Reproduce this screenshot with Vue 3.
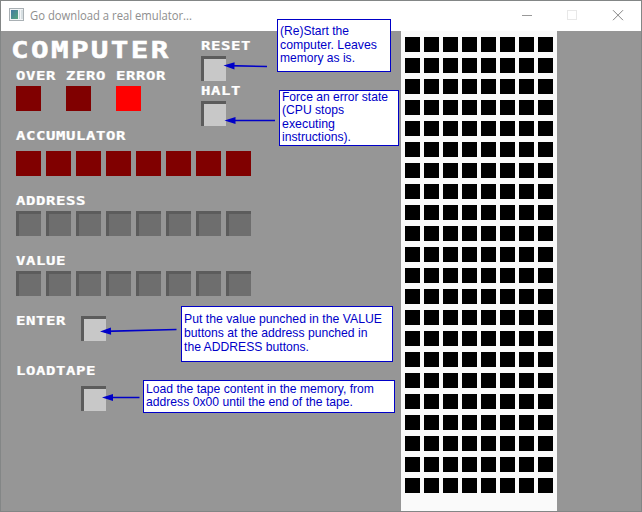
<script setup>
import { h } from 'vue'

const PixelLabel = (props) => {
  const big = props.big !== undefined
  const step = big ? 20 : 10
  const stretch = big ? 1.24 : 1.24
  const trailing = big ? 2.6 : 0.6
  const width = props.text.length * step
  return h('svg', { class: 'pixel-label', width, height: big ? 30 : 20 }, [
    h('text', {
      x: 0,
      y: big ? 22 : 14,
      'font-size': big ? 23.6 : 12.6,
      transform: `scale(${stretch} 1)`,
      textLength: (width - trailing) / stretch,
      lengthAdjust: 'spacing',
      class: big ? 'big' : 'small'
    }, props.text)
  ])
}
PixelLabel.props = ['text', 'big']

const lamps = [
  { name: 'OVER', on: false },
  { name: 'ZERO', on: false },
  { name: 'ERROR', on: true }
]

const notes = [
  {
    x: 277, y: 19, w: 114, h: 53,
    lines: [['(Re)Start the', 35, 69], ['computer. Leaves', 49, 97], ['memory as is.', 62, 75]],
    arrow: [267, 66.5, 223.5, 65.6]
  },
  {
    x: 279, y: 90, w: 120, h: 56,
    lines: [['Force an error state', 101, 106], ['(CPU stops', 114, 62], ['executing', 128, 53], ['instructions).', 141, 69]],
    arrow: [275, 120.5, 224.5, 120.5]
  },
  {
    x: 181, y: 306, w: 212, h: 56,
    lines: [['Put the value punched in the VALUE', 323, 198], ['buttons at the address punched in', 337, 183.5], ['the ADDRESS buttons.', 351, 125]],
    arrow: [176.5, 329.5, 100, 331.4]
  },
  {
    x: 143, y: 380, w: 252, h: 33,
    lines: [['Load the tape content in the memory, from', 393, 228], ['address 0x00 until the end of the tape.', 406, 207]],
    arrow: [139.5, 397.5, 102, 397.5]
  }
]

const angle = ([x1, y1, x2, y2]) => Math.atan2(y2 - y1, x2 - x1) * 180 / Math.PI
</script>

<template>
  <div class="window">
    <header class="titlebar">
      <svg class="app-icon" width="16" height="14">
        <defs>
          <linearGradient id="screen" x1="0" y1="0" x2="1" y2="1">
            <stop offset="0" stop-color="#4379a2" />
            <stop offset="1" stop-color="#55a77c" />
          </linearGradient>
        </defs>
        <rect x="0.5" y="0.5" width="14" height="12" fill="#f3f5f6" stroke="#a9b0b4" />
        <rect x="2" y="2" width="7" height="9" fill="url(#screen)" />
        <rect x="10" y="2" width="1" height="9" fill="#cbd8df" />
        <rect x="12" y="2" width="2" height="9" fill="#d7dfe2" />
      </svg>
      <svg class="caption" width="170" height="30">
        <text x="0" y="19" textLength="162" lengthAdjust="spacingAndGlyphs">Go download a real emulator...</text>
      </svg>
      <svg class="controls" width="110" height="30">
        <path d="M0 14.5h10" stroke="#999" />
        <rect x="45.5" y="9.5" width="9" height="9" fill="none" stroke="#e8e8e8" />
        <path d="M91 9.2l10 10M101 9.2l-10 10" stroke="#858585" />
      </svg>
    </header>

    <main class="body">
      <section class="panel">
        <div class="top">
          <div class="status">
            <div class="heading"><PixelLabel text="COMPUTER" big /></div>
            <div class="lamps">
              <div v-for="l in lamps" :key="l.name" class="lamp">
                <PixelLabel :text="l.name" />
                <i class="cell led" :class="{ on: l.on }"></i>
              </div>
            </div>
          </div>
          <div class="power">
            <PixelLabel text="RESET" />
            <i class="cell key"></i>
            <PixelLabel text="HALT" />
            <i class="cell key"></i>
          </div>
        </div>

        <div class="register accumulator">
          <PixelLabel text="ACCUMULATOR" />
          <div class="bits"><i v-for="n in 8" :key="n" class="cell led"></i></div>
        </div>
        <div class="register">
          <PixelLabel text="ADDRESS" />
          <div class="bits"><i v-for="n in 8" :key="n" class="cell toggle"></i></div>
        </div>
        <div class="register">
          <PixelLabel text="VALUE" />
          <div class="bits"><i v-for="n in 8" :key="n" class="cell toggle"></i></div>
        </div>
        <div class="enter">
          <PixelLabel text="ENTER" />
          <i class="cell key"></i>
        </div>
        <div class="load">
          <PixelLabel text="LOADTAPE" />
          <i class="cell key"></i>
        </div>
      </section>

      <section class="tape">
        <i v-for="n in 176" :key="n"></i>
      </section>
    </main>

    <svg class="notes" width="642" height="512">
      <g v-for="(n, i) in notes" :key="i">
        <rect :x="n.x + 0.5" :y="n.y + 0.5" :width="n.w - 1" :height="n.h - 1" fill="#fff" stroke="#0000c8" />
        <text
          v-for="[text, y, len] in n.lines" :key="text"
          :x="n.x + 3" :y="y" :textLength="len" lengthAdjust="spacingAndGlyphs"
        >{{ text }}</text>
        <line :x1="n.arrow[0]" :y1="n.arrow[1]" :x2="n.arrow[2] + 4" :y2="n.arrow[3]" stroke="#0000c8" stroke-width="1.6" />
        <path
          d="M0 0L-11 -3.6V3.6Z" fill="#0000c8"
          :transform="`translate(${n.arrow[2]} ${n.arrow[3]}) rotate(${angle(n.arrow)})`"
        />
      </g>
    </svg>
  </div>
</template>

<style>
body {
  margin: 0;
  overflow: hidden;
}

.pixel-label {
  display: block;
  flex: none;
  overflow: visible;
}

.pixel-label text {
  font-family: "DejaVu Sans Mono", monospace;
  font-weight: 700;
  fill: #fff;
  stroke: #fff;
  stroke-width: 0.25px;
}

.pixel-label .big {
  stroke-width: 0.5px;
}
</style>

<style scoped>
.window {
  position: relative;
  box-sizing: border-box;
  width: 642px;
  height: 512px;
  border: 1px solid #838686;
  background: #969696;
}

.titlebar {
  display: flex;
  height: 30px;
  background: #fff;
}

.app-icon {
  margin: 7px 5px 0 8px;
}

.caption {
  overflow: visible;
}

.caption text {
  font: 12px "Open Sans", sans-serif;
  fill: #8e8e8e;
}

.controls {
  margin-left: auto;
  margin-right: 9px;
}

.body {
  display: flex;
  height: 480px;
}

.panel {
  box-sizing: border-box;
  width: 400px;
  padding-left: 15px;
}

.top {
  display: flex;
  height: 95px;
}

.status {
  width: 185px;
}

.heading {
  height: 35px;
  margin-left: -5px;
  padding-top: 5px;
  box-sizing: border-box;
}

.lamps {
  display: flex;
}

.lamp {
  width: 50px;
}

.power {
  padding-top: 5px;
}

.cell {
  display: block;
  box-sizing: border-box;
  width: 25px;
  height: 25px;
}

.led {
  background: #800000;
}

.led.on {
  background: #f00;
}

.key,
.toggle {
  border: solid #5c5c5c;
  border-width: 3px 0 0 3px;
}

.key {
  background: #c8c8c8;
}

.toggle {
  background: #6e6e6e;
}

.register {
  margin-bottom: 15px;
}

.accumulator .bits {
  margin-top: 5px;
}

.bits {
  display: flex;
  gap: 5px;
}

.enter {
  display: flex;
  gap: 15px;
}

.enter .cell {
  margin-top: 5px;
}

.load {
  padding-top: 20px;
}

.load .cell {
  margin: 5px 0 0 65px;
}

.tape {
  display: grid;
  grid-template-columns: repeat(8, 15px);
  grid-auto-rows: 15px;
  gap: 6px 4px;
  box-sizing: border-box;
  width: 156px;
  padding: 6px 4px;
  background: #fafafa;
}

.tape i {
  background: #000;
}

.notes {
  position: absolute;
  top: -1px;
  left: -1px;
}

.notes text {
  font: 13px "Liberation Sans", Arial, sans-serif;
  fill: #0000c8;
}
</style>
